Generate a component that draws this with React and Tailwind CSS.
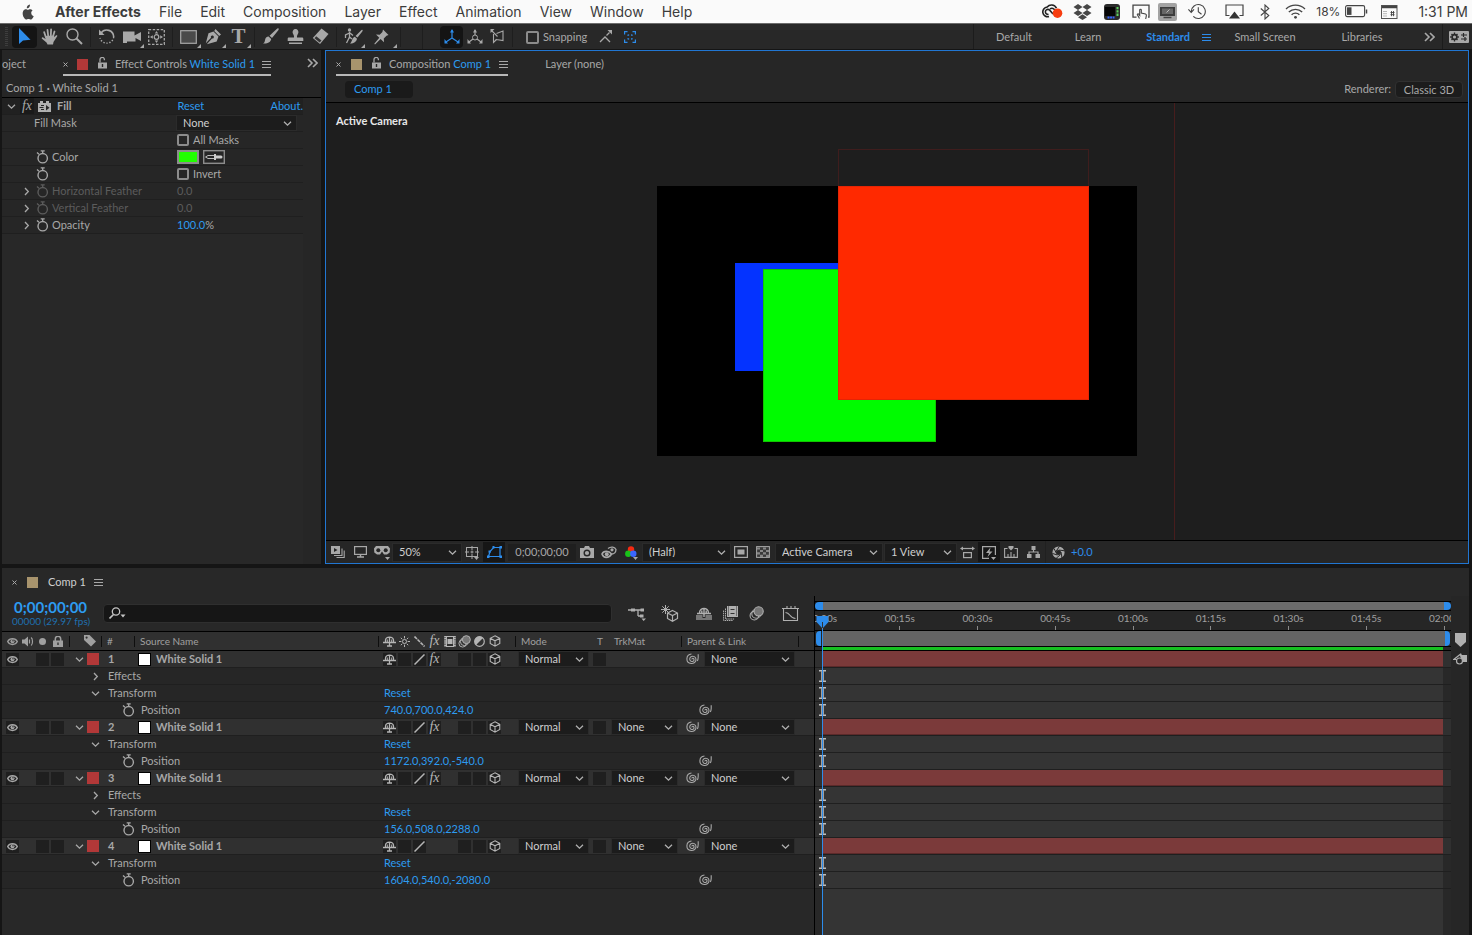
import React from 'react';
import clsx from 'clsx';

/* ---------- Icons ---------- */

const Svg = ({ w = 16, h = 16, box, className, children }) => (
  <svg width={w} height={h} viewBox={box || `0 0 ${w} ${h}`} fill="none" className={clsx('shrink-0', className)} aria-hidden="true">
    {children}
  </svg>
);

const Chevron = ({ open, className }) => (
  <Svg w={9} h={9} className={className}>
    <path d={open ? 'M1 2.8 4.5 6.2 8 2.8' : 'M3 1 6.3 4.5 3 8'} stroke="currentColor" strokeWidth="1.3" />
  </Svg>
);

const MenuLines = () => (
  <Svg w={9} h={9}>
    <path d="M0 1.5h9M0 4.5h9M0 7.5h9" stroke="currentColor" />
  </Svg>
);

const DoubleChevron = () => (
  <Svg w={11} h={10}>
    <path d="M1 1l4 4-4 4M6 1l4 4-4 4" stroke="currentColor" strokeWidth="1.6" />
  </Svg>
);

const CloseX = () => (
  <Svg w={5} h={5}>
    <path d="M.5.5l4 4M4.5.5l-4 4" stroke="currentColor" />
  </Svg>
);

const OpenLock = () => (
  <Svg w={9} h={12} className="-mt-[3px]">
    <rect x="0" y="5.5" width="9" height="6" fill="currentColor" />
    <path d="M2 5.5V2.8a2.2 2.2 0 0 1 4.4-.3v.8" stroke="currentColor" strokeWidth="1.3" />
    <path d="M4.5 7v3" stroke="#262626" strokeWidth="1.4" />
  </Svg>
);

const Stopwatch = () => (
  <Svg w={13} h={14}>
    <circle cx="6.7" cy="8.2" r="4.7" stroke="currentColor" strokeWidth="1.4" />
    <path d="M4.7.8h4M6.7 1v2.500M1 2.500l2 1.800" stroke="currentColor" strokeWidth="1.300" />
  </Svg>
);

const Eye = () => (
  <Svg w={11} h={9}>
    <path d="M.7 4.5C2.6.6 8.4.6 10.3 4.5 8.4 8.4 2.6 8.4.7 4.5Z" stroke="currentColor" strokeWidth="1.4" />
    <circle cx="5.5" cy="4.3" r="2" fill="currentColor" />
    <circle cx="6" cy="3.8" r=".7" fill="#222" />
  </Svg>
);

const Shy = () => (
  <Svg w={13} h={11}>
    <path d="M2.500 6V4.200C3 .2 10 .2 10.500 4.200V6M0 6.500h13M6.500 1v9M4 10h5" stroke="currentColor" strokeWidth="1.300" />
    <path d="M4.300 3.500v3M8.700 3.500v3" stroke="currentColor" />
  </Svg>
);

const Sun = () => (
  <Svg w={11} h={11}>
    <circle cx="5.5" cy="5.5" r="2" stroke="currentColor" />
    <path d="M5.5 0v2.4M5.5 8.6V11M0 5.5h2.4M8.6 5.5H11M1.8 1.8l1.5 1.5M7.7 7.7l1.5 1.5M9.2 1.8 7.7 3.3M3.3 7.7 1.8 9.2" stroke="currentColor" />
  </Svg>
);

const Backslash = () => (
  <Svg w={11} h={11}>
    <path d="M.5.5l10 10" stroke="currentColor" strokeWidth="1.6" strokeDasharray="3.5 .8" />
  </Svg>
);

const Slash = () => (
  <Svg w={11} h={11}>
    <path d="M.5 10.5l10-10" stroke="currentColor" strokeWidth="1.5" />
  </Svg>
);

const Fx = () => <span className="text-[14px] leading-3 italic font-['Liberation_Serif',serif]">fx</span>;

const Film = () => (
  <Svg w={12} h={11}>
    <rect x="2.5" y=".5" width="7" height="10" stroke="currentColor" />
    <rect x="3.5" y="3" width="5" height="5" fill="currentColor" />
    <path d="M1.2 0v11M10.8 0v11" stroke="currentColor" strokeWidth="2" strokeDasharray="1.5 .6" />
  </Svg>
);

const MotionBlur = ({ size = 13 }) => (
  <Svg w={size} h={size} box="0 0 14 14">
    <circle cx="5" cy="9" r="4" stroke="currentColor" />
    <circle cx="6.8" cy="7.2" r="4.2" stroke="currentColor" />
    <circle cx="9" cy="5" r="4.3" fill="#777" stroke="currentColor" />
  </Svg>
);

const Adjust = () => (
  <Svg w={11} h={11}>
    <circle cx="5.5" cy="5.5" r="4.8" stroke="currentColor" strokeWidth="1.2" />
    <path d="M9 2A4.900 4.900 0 0 0 2 9Z" fill="currentColor" />
  </Svg>
);

const Cube = () => (
  <Svg w={12} h={12}>
    <path d="M6 .8l4.8 2.5v5.2L6 11.2 1.2 8.5V3.3ZM1.2 3.3 6 5.8l4.8-2.5M6 5.8v5.4" stroke="currentColor" strokeWidth="1.1" />
  </Svg>
);

const PickWhip = () => (
  <Svg w={13} h={12}>
    <path d="M6 6.3c-.2-1.2 1.7-1.5 2 0 .3 1.7-1.6 2.6-3 1.9C3.2 7.3 3.3 4.8 5 3.7c2.2-1.3 5 .2 5 2.700 0 2.600-2.300 4.300-4.800 4.100C2.700 10.200.8 8.200.9 5.700 1 3.200 3 1.200 5.500 1M12.200 1.200v3.300c0 1.500-.3 2.500-1 3.500" stroke="currentColor" strokeWidth="1.100" />
  </Svg>
);

const CornerMark = () => (
  <Svg w={4} h={4} className="absolute right-0 bottom-0">
    <path d="M4 0v4H0z" fill="currentColor" />
  </Svg>
);

const SmallTri = () => (
  <Svg w={5} h={3} className="absolute right-0 -bottom-px">
    <path d="M0 0h5L2.500 3z" fill="currentColor" />
  </Svg>
);

/* ---------- macOS menu bar ---------- */

const menus = ['File', 'Edit', 'Composition', 'Layer', 'Effect', 'Animation', 'View', 'Window', 'Help'];

const StatusItem = ({ className, label, children }) => (
  <button aria-label={label} className={clsx('flex h-full items-center justify-center', className)}>
    {children}
  </button>
);

const MenuBar = () => (
  <header className="flex h-[23px] shrink-0 items-center bg-[#fafafa] pl-[21px] text-[14px] whitespace-nowrap text-[#3c3c3c] font-['Inter',sans-serif]">
    <button aria-label="Apple" className="mr-[20px]">
      <Svg w={14} h={16} box="0 0 14 17">
        <path d="M9.400 2.900C10 2.100 10.300 1.100 10.200 0 9.200.1 8.200.6 7.600 1.400 7 2.100 6.700 3.100 6.800 4c1 .1 2-.4 2.600-1.100ZM11.500 9c0-1.600 1.300-2.400 1.400-2.500-.8-1.200-2-1.300-2.400-1.300-1-.1-2 .6-2.500.6S6.700 5.200 5.900 5.200C4.700 5.200 3.600 5.900 3 6.900c-1.300 2.200-.3 5.500.9 7.300.6.9 1.300 1.900 2.300 1.800.9 0 1.300-.6 2.400-.6s1.400.6 2.400.6 1.600-.9 2.200-1.700c.7-1 1-2 1-2-.1 0-2.700-.7-2.700-3.300Z" fill="#444" transform="translate(-1.100 .5)" />
      </Svg>
    </button>
    <nav className="flex gap-[18px]">
      <button className="font-bold">After Effects</button>
      {menus.map((m) => <button key={m}>{m}</button>)}
    </nav>
    <div className="ml-auto flex h-full items-center pr-1">
      <StatusItem label="Creative Cloud" className="w-[30px]">
        <Svg w={21} h={15}>
          <path d="M7 12.600A4.900 4.900 0 1 1 5.200 3C7.500.2 12.500.2 14.500 4.200M6.500 10.300A2.500 2.500 0 1 1 6.300 5.400c2.200.1 2.700 3.600 5.200 4.600M13.500 7C12.500 4.200 9.500 3.500 8 5" stroke="#222" strokeWidth="1.600" />
          <circle cx="15.500" cy="9.200" r="4.800" fill="#f73d10" />
        </Svg>
      </StatusItem>
      <StatusItem label="Dropbox" className="w-[30px]">
        <Svg w={19} h={16}>
          <path d="M5 0l4.500 3L5 6 .5 3ZM14 0l4.500 3L14 6 9.500 3ZM5 6l4.500 3L5 12 .5 9ZM14 6l4.500 3-4.500 3-4.500-3ZM9.500 10.300 14 13.200 9.500 16 5 13.200Z" fill="#474747" />
        </Svg>
      </StatusItem>
      <StatusItem label="Monitor" className="w-[29px]">
        <Svg w={16} h={16}>
          <rect width="16" height="16" rx="3" fill="#2b2b2b" />
          <rect x="1" y="3" width="10" height="9" fill="#050505" />
          <path d="M13.500 3v9" stroke="#5fd35f" strokeWidth="2" strokeDasharray="2.300 1" />
          <path d="M3.500 13.500h7" stroke="#3465ff" strokeWidth="2" strokeDasharray="2 .6" />
        </Svg>
      </StatusItem>
      <StatusItem label="Touch" className="w-[29px]">
        <Svg w={18} h={15}>
          <path d="M4.500 13.200H1V1.200h16v12h-1" stroke="#444" strokeWidth="1.300" />
          <path d="M7.500 14.500 5.500 11c-.5-1 .6-1.500 1.200-.8l1 1.200V6c0-1.100 1.600-1.100 1.600 0v3l4.200 1c.8.300 1 1 .8 1.800L13.700 15" stroke="#444" strokeWidth="1.100" />
        </Svg>
      </StatusItem>
      <StatusItem label="Display" className="w-[24px]">
        <Svg w={19} h={18}>
          <rect width="19" height="18" rx="2" fill="#a3a3a3" />
          <rect x="2" y="4" width="15" height="9" fill="#3c3c3c" />
          <rect x="4" y="5.500" width="11" height="5.500" fill="#666" />
          <path d="M5.500 14.500h8" stroke="#444" strokeWidth="1.500" />
          <path d="M8.500 9.500l3-3" stroke="#bbb" />
        </Svg>
      </StatusItem>
      <StatusItem label="Time Machine" className="w-[36px]">
        <Svg w={19} h={17}>
          <path d="M3.300 8.500a7 7 0 1 1 2 4.900M.4 6.400l2.800 3 2.800-3M10.300 4.300v4.400l3.200 2.500" stroke="#444" strokeWidth="1.100" />
        </Svg>
      </StatusItem>
      <StatusItem label="AirPlay" className="w-[38px]">
        <Svg w={19} h={15}>
          <path d="M4.500 11.500H1V1h17v10.500h-3.500" stroke="#444" strokeWidth="1.200" />
          <path d="M9.500 7.500 15 14.500H4Z" fill="#333" />
        </Svg>
      </StatusItem>
      <StatusItem label="Bluetooth" className="w-[24px]">
        <Svg w={10} h={16}>
          <path d="M.8 4.500l8 7L5 15V1l3.800 3.500-8 7" stroke="#444" strokeWidth="1.100" />
        </Svg>
      </StatusItem>
      <StatusItem label="Wi-Fi" className="w-[36px]">
        <Svg w={21} h={15}>
          <path d="M1 5a13.500 13.500 0 0 1 19 0M3.800 8a9.600 9.600 0 0 1 13.400 0M6.600 10.800a5.500 5.500 0 0 1 7.800 0" stroke="#444" strokeWidth="1.300" />
          <circle cx="10.500" cy="13.300" r="1.400" fill="#444" />
        </Svg>
      </StatusItem>
      <span className="mr-1 ml-[3px] text-[12px]">18%</span>
      <StatusItem label="Battery" className="w-[24px]">
        <Svg w={23} h={13}>
          <rect x=".6" y=".6" width="19" height="11" rx="1.500" stroke="#444" strokeWidth="1.100" />
          <rect x="2" y="2.300" width="4.500" height="7.600" fill="#444" />
          <path d="M21.500 4.500v4" stroke="#444" strokeWidth="1.500" />
        </Svg>
      </StatusItem>
      <StatusItem label="Keyboard viewer" className="w-[42px]">
        <Svg w={17} h={14}>
          <rect x=".5" y=".5" width="15.500" height="13" stroke="#555" />
          <path d="M1 2h15" stroke="#444" strokeWidth="2.500" />
          <path d="M2.500 6.500h4M2.500 8.700h4M2.500 11h4" stroke="#777" strokeDasharray="1 1" />
          <path d="M9.500 7.500h4M9.500 9.700h4M10.500 6v5.200M12.500 6v5.200" stroke="#444" strokeWidth=".9" />
        </Svg>
      </StatusItem>
      <span className="ml-2">1:31 PM</span>
    </div>
  </header>
);

/* ---------- Toolbar ---------- */

const Tool = ({ label, active, more, width = 'w-[25px]', children }) => (
  <button
    aria-label={label}
    className={clsx('relative flex h-[22px] items-center justify-center', width, active && 'rounded-sm bg-[#141414] text-[#2d8ceb]')}
  >
    {children}
    {more && <CornerMark />}
  </button>
);

const Sep = () => <span className="mx-[3px] h-5 w-px bg-[#1e1e1e]" />;

const workspaces = [
  ['Default', 'w-[80px]'],
  ['Learn', 'w-[68px]'],
  ['Standard', 'w-[100px]'],
  ['Small Screen', 'w-[86px]'],
  ['Libraries', 'w-[108px]'],
];

const Toolbar = () => (
  <div className="flex h-[26px] shrink-0 items-center border-t border-[#6b6b6b] bg-[#282828] text-[#a8a8a8]">
    <span className="mr-1 ml-[5px] h-5 w-[3px] bg-[repeating-linear-gradient(#3d3d3d_0_1px,transparent_1px_2px)]" />
    <Tool label="Selection" active>
      <Svg w={13} h={17}><path d="M1 0v16l4-3.500 7.500-.8Z" fill="currentColor" /></Svg>
    </Tool>
    <Tool label="Hand">
      <Svg w={17} h={17}>
        <path d="M4.800 9 3.200 4.200M7.200 8 6.500 2M9.800 8l.3-6.500M12 8.500l1.500-5" stroke="currentColor" strokeWidth="1.800" strokeLinecap="round" />
        <path d="M4 8l9-.5c0 2 .5 1.500 2-.2.800-.5 1.700.2 1.200 1L12.500 14l-.5 2.500H6.500L5.500 14.500 1 10.800c-.8-.8.2-1.900 1.200-1.400L4.500 11Z" fill="currentColor" />
      </Svg>
    </Tool>
    <Tool label="Zoom">
      <Svg w={17} h={17}>
        <circle cx="6.500" cy="6.500" r="5.500" stroke="currentColor" strokeWidth="1.400" />
        <path d="M10.500 10.500l5.500 5.500" stroke="currentColor" strokeWidth="2" />
      </Svg>
    </Tool>
    <Sep />
    <Tool label="Rotation">
      <Svg w={17} h={17}>
        <path d="M3 5A7 7 0 0 1 15.700 9" stroke="currentColor" strokeWidth="1.600" />
        <path d="M15.700 9A7 7 0 0 1 2 10" stroke="currentColor" strokeWidth="1.400" strokeDasharray="1.400 1.600" />
        <path d="M1 1.500v5.500h5.500Z" fill="currentColor" />
      </Svg>
    </Tool>
    <Tool label="Camera" more>
      <Svg w={19} h={14}>
        <path d="M1 1.500h11.500v4L19 2v9l-5.500-3v3.500H5V13H1Z" fill="currentColor" />
      </Svg>
    </Tool>
    <Tool label="Pan Behind">
      <Svg w={17} h={16}>
        <rect x=".7" y=".7" width="15.600" height="14.600" stroke="currentColor" strokeWidth="1.300" strokeDasharray="2.500 1.500" />
        <circle cx="8.500" cy="8" r="2.300" stroke="currentColor" strokeWidth="1.200" />
        <path d="M8.500 2 6.800 4.500h3.400ZM8.500 14l-1.700-2.500h3.400ZM2 8l2.800-1.700v3.400ZM15 8l-2.800-1.700v3.400Z" fill="currentColor" />
      </Svg>
    </Tool>
    <Sep />
    <Tool label="Rectangle" more>
      <Svg w={17} h={14}><rect x=".7" y=".7" width="15.600" height="12.600" fill="#4a4a4a" stroke="currentColor" strokeWidth="1.200" /></Svg>
    </Tool>
    <Tool label="Pen" more>
      <Svg w={17} h={17}>
        <path d="M10.500 1l5.500 5.500-1.800 1.400-5-5ZM8.500 3.500l5 5-1.800 5L1.800 16.200 7 10.500A1.500 1.500 0 1 0 6 9.700L.8 15.200 3.500 5.300Z" fill="currentColor" />
      </Svg>
    </Tool>
    <Tool label="Type" more>
      <span className="text-[21px] leading-none font-bold font-['Liberation_Serif',serif]">T</span>
    </Tool>
    <Sep />
    <Tool label="Brush">
      <Svg w={17} h={17}>
        <path d="M16.500.5c.6.500.2 1.200-.2 1.800L10 10 7.500 7.800 14.700 1c.600-.500 1.200-1 1.800-.5ZM6.600 8.600 9.200 11c-.500 3-3.500 5-8.200 4.500 2-1 1.600-2.500 2.300-4.500.500-1.400 1.700-2.500 3.300-2.400Z" fill="currentColor" />
      </Svg>
    </Tool>
    <Tool label="Clone Stamp">
      <Svg w={17} h={16}>
        <path d="M8.500 0a3 3 0 0 1 2.700 4.200C10.300 6 9.800 7 10 8.500h5c1 0 1.300.5 1.300 1.500v2H.7v-2C.7 9 1 8.500 2 8.500h5c.2-1.500-.3-2.500-1.200-4.300A3 3 0 0 1 8.500 0ZM2 13.500h13V15H2Z" fill="currentColor" />
      </Svg>
    </Tool>
    <Tool label="Eraser">
      <Svg w={17} h={17}>
        <path d="M9.500.5 16.500 6 8 16 .8 10Z" fill="currentColor" />
        <path d="M4.200 8.300 2.500 10.200l5.200 4.300 1.800-2Z" fill="#333" />
      </Svg>
    </Tool>
    <Sep />
    <Tool label="Roto Brush" more>
      <Svg w={20} h={17}>
        <circle cx="6.500" cy="2" r="1.700" fill="currentColor" />
        <path d="M6.500 4v5l-3 6M6.500 9l2.500 2M6.500 5 2.500 7v3M7 5l3 2.500" stroke="currentColor" strokeWidth="1.300" />
        <path d="M19.500 2c.4.400.1 1-.2 1.400L14.500 9.500l-2-1.500 5.500-5.600c.5-.5 1-.800 1.500-.4ZM11.800 8.800l2.200 1.900c-.5 3-3.500 5-7 4.800 2.500-1.500 1.800-6 4.800-6.700Z" fill="currentColor" />
      </Svg>
    </Tool>
    <Tool label="Puppet Pin" more width="w-[32px]">
      <Svg w={15} h={16}>
        <path d="M9 .5 14.500 6l-2 .7-2.700 2.800.2 3.700-3.400-3.300L1 15.500.3 14.800l5-6L2 5.500l3.700.200L8.400 3Z" fill="currentColor" />
      </Svg>
    </Tool>
    <Sep />
    <span className="mr-[17px] ml-[18px] h-6 w-px bg-[#1e1e1e]" />
    <Tool label="Local Axis Mode" active width="w-[23px]">
      <Svg w={16} h={15}>
        <path d="M8 1v8L2 13M8 9l6 4" stroke="currentColor" strokeWidth="1.200" />
        <path d="M8 0 6 3.500h4ZM.5 14.500V10l3.500 4.500ZM15.500 14.500V10L12 14.500Z" fill="currentColor" />
      </Svg>
    </Tool>
    <Tool label="World Axis Mode" width="w-[23px]">
      <Svg w={16} h={15}>
        <path d="M8 1v5M6 10l-4 3M10 10l4 3" stroke="currentColor" strokeWidth="1.200" />
        <circle cx="8" cy="8.500" r="2.500" stroke="currentColor" />
        <path d="M8 0 6 3.500h4ZM.5 14.500V10l3.500 4.500ZM15.500 14.500V10L12 14.500Z" fill="currentColor" />
      </Svg>
    </Tool>
    <Tool label="View Axis Mode" width="w-[23px]">
      <Svg w={16} h={15}>
        <path d="M3.500 5v8.500l3-3 6.500 1V2L6.500 4.500M1.500 1.500l6 6M3.500 13.500 6.500 10" stroke="currentColor" strokeWidth="1.100" />
        <path d="M.5 0h4L.5 4Z" fill="currentColor" />
      </Svg>
    </Tool>
    <Sep />
    <label className="ml-[10px] flex items-center gap-1 pt-[2px] text-[11px]">
      <input type="checkbox" className="size-[13px] appearance-none rounded-[2px] border-2 border-[#8c8c8c] checked:bg-[#8c8c8c]" />
      Snapping
    </label>
    <button aria-label="Snap edges" className="ml-3">
      <Svg w={13} h={13}>
        <path d="M1 12l5-5 5 5M7.500 5.500l3-3" stroke="currentColor" strokeWidth="1.300" />
        <path d="M8.500 0H13v4.500Z" fill="currentColor" />
      </Svg>
    </button>
    <button aria-label="Snap to features" className="ml-3 text-[#2d8ceb]">
      <Svg w={12} h={12}>
        <path d="M.6 3.500V.6h2.900M8.500.6h2.900v2.900M11.400 8.500v2.900H8.500M3.500 11.400H.6V8.500" stroke="currentColor" strokeWidth="1.200" />
        <path d="M4 4h1.200M7 4h1.200M4 8h1.200M7 8h1.200M4 3.500v1.500M8 3.500v1.500M4 7v1.500M8 7v1.500" stroke="currentColor" />
      </Svg>
    </button>
    <div className="ml-auto flex h-full items-center border-l border-[#1c1c1c] text-[11px]">
      {workspaces.map(([name, width]) =>
        name === 'Standard' ? (
          <button key={name} className={clsx('flex items-center justify-end gap-3 pt-[2px] pr-[11px] font-bold text-[#2d8ceb]', width)}>
            {name}
            <MenuLines />
          </button>
        ) : (
          <button key={name} className={clsx('pt-[2px]', width)}>{name}</button>
        ),
      )}
      <button aria-label="More workspaces" className="flex w-[26px] justify-center"><DoubleChevron /></button>
      <span className="mr-[3px] h-full w-px bg-[#1c1c1c]" />
      <button aria-label="Workspace settings" className="flex w-[26px] justify-center">
        <Svg w={20} h={12}>
          <rect width="20" height="12" rx="1" fill="currentColor" />
          <circle cx="5.500" cy="6" r="2.400" stroke="#282828" strokeWidth="1.700" />
          <path d="M5.500 1.600v1.500M5.500 9v1.500M1.100 6h1.500M8.400 6h1.500M2.500 3l1 1M7.500 8l1 1M8.500 3l-1 1M3.500 8l-1 1" stroke="#282828" strokeWidth="1.400" />
          <path d="M12 4h6M12 8h6M14.500 2v4M16 6v4" stroke="#282828" strokeWidth="1.200" />
        </Svg>
      </button>
    </div>
  </div>
);

/* ---------- Effect Controls ---------- */

const Select = ({ label, value, className }) => (
  <span className={clsx('relative flex items-center bg-[#1c1c1c] text-[#cfcfcf] outline outline-[#2b2b2b]', className)}>
    <select aria-label={label} className="h-full w-full appearance-none pb-[2px] pl-[6px] text-[11px] leading-none outline-none">
      <option>{value}</option>
    </select>
    <Chevron open className="pointer-events-none absolute right-[4px] text-[#b0b0b0]" />
  </span>
);

const FxRow = ({ label, dim, timed = true, arrow, children }) => (
  <div className={clsx('flex h-[17px] items-center border-b border-[#1f1f1f]', dim && 'text-[#5c5c5c]')}>
    <span className="flex w-[34px] justify-end pr-[5px] text-[#a8a8a8]">{arrow && <Chevron />}</span>
    <span className={clsx('flex w-[141px] items-center gap-[3px]', !timed && '-ml-[2px] mr-[2px]')}>
      {timed && <Stopwatch />}
      {label}
    </span>
    {children}
  </div>
);

const FxCheck = ({ label }) => (
  <label className="flex items-center gap-1">
    <input type="checkbox" className="size-[12px] appearance-none rounded-[2px] border-2 border-[#8c8c8c] checked:bg-[#8c8c8c]" />
    {label}
  </label>
);

const EffectControls = () => (
  <section className="flex w-[319px] shrink-0 flex-col bg-[#262626] text-[11px] text-[#a8a8a8]">
    <div className="flex h-[26px] items-center overflow-hidden">
      <button className="w-[61px] pt-[2px] text-left">oject</button>
      <div className="flex h-full items-center border-b-2 border-[#b8b8b8] pt-[4px]">
        <CloseX />
        <span className="mr-[10px] ml-[9px] size-[11px] bg-[#b23838]" />
        <OpenLock />
        <button className="mr-[7px] ml-2">
          Effect Controls <span className="text-[#2d9bf0]">White Solid 1</span>
        </button>
        <MenuLines />
      </div>
      <button aria-label="More tabs" className="mr-[3px] ml-auto"><DoubleChevron /></button>
    </div>
    <div className="h-[22px] border-b border-black pl-1 leading-[24px]">Comp 1 <b>·</b> White Solid 1</div>
    <div className="mr-[18px]">
      <div className="flex h-[17px] items-center border-b border-[#1f1f1f] bg-[#212121] pl-[5px]">
        <Chevron open />
        <span className="ml-1 w-[14px] bg-[#1a1a1a] text-center"><Fx /></span>
        <Svg w={13} h={12} className="ml-[4px] text-[#b0b0b0]">
          <path d="M0 3h2V1h3v2h3V1h3v2h2v9H0Z" fill="currentColor" />
          <path d="M3 5.500h3M1.500 7.500h4M3 9.500h3" stroke="#262626" />
          <path d="M8 5v5.500l3.500-2.700Z" fill="#262626" />
        </Svg>
        <span className="ml-[6px] flex-1 font-bold">Fill</span>
        <button className="w-[93px] text-left text-[#2d9bf0]">Reset</button>
        <button className="text-[#2d9bf0]">About.</button>
      </div>
      <FxRow label="Fill Mask" timed={false}>
        <Select label="Fill Mask" value="None" className="h-[14px] w-[119px]" />
      </FxRow>
      <FxRow timed={false}><FxCheck label="All Masks" /></FxRow>
      <FxRow label="Color">
        <label className="flex h-[14px] w-[22px] border-2 border-[#8c8c8c] bg-[#22ff00]">
          <input type="color" aria-label="Color" defaultValue="#22ff00" className="size-full opacity-0" />
        </label>
        <button aria-label="Eyedropper" className="ml-1">
          <Svg w={22} h={14}>
            <rect x=".7" y=".7" width="20.600" height="12.600" stroke="#8c8c8c" strokeWidth="1.400" />
            <path d="M2.500 7 5 5.500h6M2.500 7 5 8.500h6" stroke="#bbb" />
            <path d="M11 4h2v1.500h5a1.500 1.500 0 0 1 0 3h-5V10h-2Z" fill="#ccc" />
          </Svg>
        </button>
      </FxRow>
      <FxRow><FxCheck label="Invert" /></FxRow>
      <FxRow label="Horizontal Feather" arrow dim>0.0</FxRow>
      <FxRow label="Vertical Feather" arrow dim>0.0</FxRow>
      <FxRow label="Opacity" arrow>
        <span className="text-[#2d9bf0]">100.0</span>%
      </FxRow>
    </div>
    <div className="mr-[18px] flex-1 bg-[#282828]" />
  </section>
);

/* ---------- Composition viewer ---------- */

const ViewBtn = ({ label, active, tri, children }) => (
  <button aria-label={label} className={clsx('flex h-[20px] w-[22px] items-center justify-center', active && 'bg-[#161616]')}>
    <span className="relative">
      {children}
      {tri && <SmallTri />}
    </span>
  </button>
);

const ViewerBar = () => (
  <div className="flex h-[23px] shrink-0 items-center border-t border-black bg-[#262626] pl-px text-[11px] text-[#a8a8a8]">
    <ViewBtn label="Always Preview This View">
      <Svg w={14} h={12}>
        <rect width="9" height="8" fill="currentColor" />
        <path d="M3 2v4l3.500-2Z" fill="#262626" />
        <path d="M11 2.500v7H3M13.200 4.500v7H5.500" stroke="currentColor" strokeWidth="1.100" />
      </Svg>
    </ViewBtn>
    <ViewBtn label="Primary Viewer">
      <Svg w={13} h={12}>
        <rect x=".6" y=".6" width="11.800" height="7.800" stroke="currentColor" strokeWidth="1.200" />
        <path d="M6.500 8.500v2M3 11h7" stroke="currentColor" strokeWidth="1.400" />
      </Svg>
    </ViewBtn>
    <ViewBtn label="3D Glasses" tri>
      <Svg w={16} h={13}>
        <path d="M2 0h12l2 2.500-.3 4-2.700 2H10L8 5.500 6 8.500H3L.3 6.500 0 2.500Z" fill="currentColor" />
        <circle cx="4.300" cy="4.300" r="2" fill="#262626" />
        <circle cx="11.700" cy="4.300" r="2" fill="#262626" />
      </Svg>
    </ViewBtn>
    <Select label="Magnification" value="50%" className="h-[17px] w-[68px]" />
    <ViewBtn label="Grid and guides" tri>
      <Svg w={14} h={13}>
        <rect x="1.500" y="1.500" width="11" height="9" stroke="currentColor" />
        <path d="M7 0v4M7 8v5M0 6h4M10 6h4M5.500 6h3M7 4.500v3" stroke="currentColor" />
      </Svg>
    </ViewBtn>
    <ViewBtn label="Mask visibility" active>
      <Svg w={15} h={12} className="text-[#2d8ceb]">
        <path d="M1.500 10.500 3 5.500 6.500 1.500h6.500v9Z" stroke="currentColor" strokeWidth="1.200" />
        <path d="M0 9.500h2.500V12H0ZM12.500 9.500H15V12h-2.500ZM12.500 0H15v2.500h-2.500ZM5.500 0h2v2.500h-2ZM1.500 4.500h2.200v2.200H1.500Z" fill="currentColor" />
      </Svg>
    </ViewBtn>
    <button className="ml-[3px] h-[17px] w-[68px] bg-[#1f1f1f]">0;00;00;00</button>
    <ViewBtn label="Take Snapshot">
      <Svg w={14} h={12}>
        <path d="M0 2h4l1-2h4l1 2h4v10H0Z" fill="currentColor" />
        <circle cx="7" cy="7" r="2.800" stroke="#262626" strokeWidth="1.400" />
      </Svg>
    </ViewBtn>
    <ViewBtn label="Show Snapshot">
      <Svg w={16} h={13}>
        <path d="M1 8C2.500 4.500 8 4.500 10.500 8 8 12.500 2.500 12.500 1 8Z" stroke="currentColor" strokeWidth="1.600" />
        <circle cx="5.800" cy="8.200" r="2" fill="currentColor" />
        <path d="M7 2.500c3-2.500 7-1.500 8 1-.2 3-2 4.500-4.500 4.500" stroke="currentColor" strokeWidth="1.300" />
        <circle cx="11" cy="3.800" r="1.600" fill="currentColor" />
      </Svg>
    </ViewBtn>
    <ViewBtn label="Channels" tri>
      <Svg w={13} h={13}>
        <circle cx="6" cy="3.500" r="3.200" fill="#f52a12" />
        <circle cx="3.300" cy="7.800" r="3.200" fill="#19c219" />
        <circle cx="8.300" cy="7.800" r="3.200" fill="#3a66ff" />
      </Svg>
    </ViewBtn>
    <Select label="Resolution" value="(Half)" className="ml-px h-[17px] w-[87px]" />
    <ViewBtn label="Region of Interest">
      <Svg w={14} h={12}>
        <rect x=".6" y=".6" width="12.800" height="10.800" stroke="currentColor" strokeWidth="1.200" />
        <rect x="3.500" y="3.500" width="7" height="5" fill="currentColor" />
      </Svg>
    </ViewBtn>
    <ViewBtn label="Transparency Grid">
      <Svg w={14} h={12}>
        <rect x=".6" y=".6" width="12.800" height="10.800" fill="#3a3a3a" stroke="currentColor" />
        <path d="M1 2.500h12M4 5h9M1 7.300h12M4 9.800h9" stroke="#888" strokeWidth="2.200" strokeDasharray="3 3" />
      </Svg>
    </ViewBtn>
    <Select label="3D View" value="Active Camera" className="ml-[2px] h-[17px] w-[106px]" />
    <Select label="View Layout" value="1 View" className="ml-[3px] h-[17px] w-[71px]" />
    <ViewBtn label="Pixel Aspect Ratio">
      <Svg w={15} h={13}>
        <path d="M2 2.500h11" stroke="currentColor" strokeWidth="1.200" />
        <path d="M0 2.500 3 .5v4ZM15 2.500 12 .5v4Z" fill="currentColor" />
        <rect x="3.600" y="6.600" width="7.800" height="5" stroke="currentColor" strokeWidth="1.200" />
      </Svg>
    </ViewBtn>
    <ViewBtn label="Fast Previews" active tri>
      <Svg w={14} h={13}>
        <path d="M7 12.400H.6V.6h12.800V9" stroke="currentColor" strokeWidth="1.200" />
        <path d="M8.500 1.500 4 7h3l-1.500 4L10.500 5.500h-3Z" fill="currentColor" />
      </Svg>
    </ViewBtn>
    <ViewBtn label="Timeline">
      <Svg w={14} h={12}>
        <path d="M3.500 2.500H.6v8.900h12.800V2.500h-2.900M4 8v3M7 6v5M10 8v3" stroke="currentColor" strokeWidth="1.100" />
        <path d="M4.500 0h5v2L7 4.500 4.500 2Z" fill="currentColor" />
      </Svg>
    </ViewBtn>
    <ViewBtn label="Flowchart">
      <Svg w={13} h={12}>
        <path d="M4.500 0h4v4h-4ZM0 8h4.500v4H0ZM8.500 8H13v4H8.500Z" fill="currentColor" />
        <path d="M6.500 4v2M2 8V6h9v2" stroke="currentColor" strokeWidth="1.200" />
      </Svg>
    </ViewBtn>
    <span className="mx-px h-full w-px bg-[#202020]" />
    <ViewBtn label="Reset Exposure">
      <Svg w={13} h={13}>
        <circle cx="6.500" cy="6.500" r="4.300" stroke="currentColor" strokeWidth="3.600" />
        <path d="M4.200 5.200 7.500.2M6.800 4l5.700.8M9 6l1 6M8.500 8.500l-4.500 4M5.500 9 .5 7.500M4.300 7 2 2.500" stroke="#262626" />
      </Svg>
    </ViewBtn>
    <button className="ml-[2px] text-[#2d8ceb]">+0.0</button>
  </div>
);

const Composition = () => (
  <section className="ml-[4px] flex min-w-0 flex-1 flex-col border border-[#2176d2] bg-[#262626] text-[11px] text-[#a8a8a8]">
    <div className="flex h-[25px] shrink-0 items-center pl-[10px]">
      <div className="flex h-full items-center border-b-2 border-[#b8b8b8] pt-[3px]">
        <CloseX />
        <span className="mr-[10px] ml-[10px] size-[11px] bg-[#a8946d]" />
        <OpenLock />
        <button className="mr-2 ml-[8px]">
          Composition <span className="text-[#2d9bf0]">Comp 1</span>
        </button>
        <MenuLines />
      </div>
      <button className="ml-[37px] pt-[2px]">Layer (none)</button>
    </div>
    <div className="flex h-[27px] shrink-0 items-center border-b border-black pr-[5px] pl-[19px]">
      <button className="h-[17px] w-[68px] rounded-sm bg-[#1a1a1a] pr-[12px] text-[#2d9bf0]">Comp 1</button>
      <span className="mr-1 ml-auto">Renderer:</span>
      <button className="h-[17px] w-[68px] rounded-sm border border-[#303030] bg-[#1c1c1c] leading-none">Classic 3D</button>
    </div>
    <div className="relative flex flex-1 items-center justify-center overflow-hidden bg-[#1e1e1e] pb-px">
      <p className="absolute top-[10px] left-[10px] font-bold text-[#e8e8e8]">Active Camera</p>
      {/* canvas with the solids and their guides */}
      <div className="relative h-[270px] w-[480px] bg-black">
        <div className="absolute top-[77px] left-[78px] h-[108px] w-[104px] bg-[#0433ff]" />
        <div className="absolute top-[83px] left-[106px] h-[173px] w-[173px] border border-[#12c400] bg-[#00fb00]" />
        <div className="absolute -top-[37px] left-[181px] h-[38px] w-[251px] border border-[#3f1d1d]" />
        <div className="absolute top-0 left-[181px] h-[214px] w-[251px] border border-[#e52505] bg-[#ff2900]" />
        <div className="absolute -top-[100px] left-[517px] h-[480px] w-px bg-[#481d1d]" />
      </div>
    </div>
    <ViewerBar />
  </section>
);

/* ---------- Timeline ---------- */

const layers = [
  { id: 1, fx: true, matte: false, effects: true, position: '740.0,700.0,424.0' },
  { id: 2, fx: true, matte: true, effects: false, position: '1172.0,392.0,-540.0' },
  { id: 3, fx: true, matte: true, effects: true, position: '156.0,508.0,2288.0' },
  { id: 4, fx: false, matte: true, effects: false, position: '1604.0,540.0,-2080.0' },
];

const times = ['00:00s', '00:15s', '00:30s', '00:45s', '01:00s', '01:15s', '01:30s', '01:45s', '02:00s'];

const Cell = ({ plain, children }) => (
  <span className={clsx('flex h-[13px] w-[13px] items-center justify-center', !plain && 'bg-[#1f1f1f]')}>{children}</span>
);

const ColSep = () => <span className="h-[11px] w-px shrink-0 bg-[#0e0e0e]" />;

const LayerRow = ({ layer }) => (
  <div className="flex h-[17px] items-center border-b border-[#1f1f1f] bg-[#303030]">
    <div className="flex w-[381px] items-center pl-[4px]">
      <Cell><Eye /></Cell>
      <span className="ml-[17px] flex gap-[2px]"><Cell /><Cell /></span>
      <Chevron open className="ml-[11px]" />
      <span className="ml-[3px] size-[12px] bg-[#b23838]" />
      <span className="ml-[9px] w-[30px] font-bold">{layer.id}</span>
      <span className="size-[13px] border border-black bg-white" />
      <span className="ml-[5px] font-bold">White Solid 1</span>
    </div>
    <div className="flex w-[120px] gap-[2px] text-[#b5b5b5]">
      <Cell><Shy /></Cell>
      <Cell />
      <Cell><Slash /></Cell>
      <Cell plain={!layer.fx}>{layer.fx && <Fx />}</Cell>
      <Cell plain />
      <Cell />
      <Cell />
      <Cell><Cube /></Cell>
    </div>
    <Select label="Mode" value="Normal" className="ml-[16px] h-[14px] w-[69px]" />
    <span className="ml-[5px]"><Cell /></span>
    {layer.matte ? (
      <Select label="Track matte" value="None" className="ml-[6px] h-[14px] w-[65px]" />
    ) : (
      <span className="ml-[6px] w-[65px]" />
    )}
    <span className="mr-[6px] ml-[9px]"><PickWhip /></span>
    <Select label="Parent" value="None" className="h-[14px] w-[89px]" />
  </div>
);

const PropRow = ({ open, label, value, timed, whip }) => (
  <div className="flex h-[17px] items-center border-b border-[#1f1f1f] bg-[#262626]">
    {timed ? (
      <div className="flex w-[382px] items-center gap-[6px] pl-[120px]"><Stopwatch />{label}</div>
    ) : (
      <div className="flex w-[382px] items-center gap-2 pl-[89px]"><Chevron open={open} />{label}</div>
    )}
    <button className="text-[#2d9bf0]">{value}</button>
    {whip && <span className="mr-[102px] ml-auto"><PickWhip /></span>}
  </div>
);

const ColumnHeads = () => (
  <div className="flex h-[20px] items-center border-y border-black bg-[#303030] text-[10px] text-[#a0a0a0]">
    <div className="flex w-[67px] items-center gap-1 pl-[5px]">
      <Eye />
      <Svg w={12} h={11}>
        <path d="M0 3.500h2.500L6 .5v10L2.500 7.500H0Z" fill="currentColor" />
        <path d="M7.500 3.500v4M9 1.500c2 1 2 7 0 8" stroke="currentColor" strokeWidth="1.200" />
      </Svg>
      <Svg w={9} h={9}><circle cx="4.500" cy="4.500" r="3.500" fill="currentColor" /></Svg>
      <Svg w={10} h={11} className="ml-[2px]">
        <rect y="4.500" width="10" height="6.500" fill="currentColor" />
        <path d="M2.300 5V3a2.700 2.700 0 0 1 5.400 0v2" stroke="currentColor" strokeWidth="1.500" />
        <path d="M5 6.500v2.500" stroke="#303030" strokeWidth="1.400" />
      </Svg>
    </div>
    <ColSep />
    <div className="flex w-[31px] justify-center pl-2">
      <Svg w={12} h={12}>
        <path d="M0 0h5.500l6.500 6.500L7 11.500 0 5Z" fill="currentColor" />
        <circle cx="2.600" cy="2.600" r="1.100" fill="#303030" />
      </Svg>
    </div>
    <ColSep />
    <span className="w-[32px] pl-[5px]">#</span>
    <ColSep />
    <span className="w-[243px] pl-[5px]">Source Name</span>
    <ColSep />
    <div className="flex w-[136px] items-center gap-[2px] pl-[4px] text-[#b5b5b5]">
      {[Shy, Sun, Backslash, Fx, Film, MotionBlur, Adjust, Cube].map((Icon, i) => (
        <Cell plain key={i}><Icon /></Cell>
      ))}
    </div>
    <ColSep />
    <span className="w-[81px] pl-[5px]">Mode</span>
    <span className="w-[17px]">T</span>
    <span className="w-[67px]">TrkMat</span>
    <ColSep />
    <span className="w-[116px] pl-[5px]">Parent &amp; Link</span>
    <ColSep />
  </div>
);

const TimelineControls = () => (
  <div className="flex h-[35px] items-center pl-[10px]">
    <div className="w-[91px]">
      <p className="pl-[2px] text-[15px] leading-[15px] font-bold text-[#2d9bf0]">0;00;00;00</p>
      <p className="text-[10px] leading-[13px] text-[#1f6fae]">00000 (29.97 fps)</p>
    </div>
    <label className="flex h-[19px] w-[509px] items-center rounded-sm border border-[#2f2f2f] bg-[#161616] pl-[5px]">
      <Svg w={17} h={12} className="-mt-[2px] text-[#c4c4c4]">
        <circle cx="7" cy="4.500" r="3.700" stroke="currentColor" strokeWidth="1.300" />
        <path d="M4.500 7.500.5 11.500" stroke="currentColor" strokeWidth="1.600" />
        <path d="M11.500 7.500h5L14 10.500Z" fill="currentColor" />
      </Svg>
      <input type="search" aria-label="Search layers" className="min-w-0 flex-1 outline-none" />
    </label>
    <div className="ml-[16px] flex items-center text-[#b0b0b0]">
      <button aria-label="Mini-Flowchart" className="w-[33px]">
        <Svg w={18} h={14}>
          <path d="M0 3h4M6 3h4M10 3v6M10 3h5M10 9h4" stroke="currentColor" strokeWidth="1.300" />
          <rect x="3" y="1.500" width="4" height="3" fill="currentColor" />
          <path d="M12.500 1.500H16v3h-3.500ZM12 7.500h3.500v3H12ZM13.500 11.500h4.500L15.700 14Z" fill="currentColor" />
        </Svg>
      </button>
      <button aria-label="Draft 3D" className="w-[35px]">
        <Svg w={18} h={17}>
          <path d="M4.500 0v9M0 4.500h9M1.300 1.300l6.400 6.400M7.700 1.300 1.300 7.700" stroke="currentColor" />
          <path d="M11.500 5.500l5 2.500v5.500l-5 2.700-5-2.700V8ZM6.500 8l5 2.600 5-2.600M11.500 10.600v5.600" stroke="currentColor" strokeWidth="1.200" fill="#282828" />
        </Svg>
      </button>
      <button aria-label="Hide shy layers" className="w-[27px]">
        <Svg w={16} h={13}>
          <path d="M3.500 6C3.500 0 12.500 0 12.500 6M1 6.500h14M8 1.500V10M5.800 3.500v3M10.200 3.500v3" stroke="currentColor" strokeWidth="1.400" />
          <path d="M0 8h6.500v3h3V8H16v5H0Z" fill="#777" />
        </Svg>
      </button>
      <button aria-label="Frame blending" className="w-[26px]">
        <Svg w={15} h={15}>
          <rect x="4" y="0" width="11" height="11" fill="currentColor" />
          <path d="M5.500.5v10M13.500.5v10" stroke="#333" strokeDasharray="1 1" />
          <path d="M7.500 3.500h4M7.500 7.500h4" stroke="#333" />
          <path d="M2.500 2.500v10.500h9M.6 4.500v10h9" stroke="currentColor" strokeDasharray="1.500 .7" />
        </Svg>
      </button>
      <button aria-label="Motion blur" className="w-[33px]"><MotionBlur size={15} /></button>
      <button aria-label="Graph editor">
        <Svg w={17} h={15}>
          <path d="M1.500 2.500h14v12h-14ZM0 2.500h17M5 0v2.500M9 0v2.500M13 0v2.500M3.500 6.500c5 0 4 6 10 6" stroke="currentColor" strokeWidth="1.100" />
        </Svg>
      </button>
    </div>
  </div>
);

const Keyframe = () => (
  <Svg w={7} h={12} className="-ml-[3px]">
    <path d="M0 .8h7M0 11.200h7" stroke="#bdbdbd" strokeWidth="1.500" />
    <path d="M3.500 1v10" stroke="#a0a0a0" strokeWidth="3" />
  </Svg>
);

// one bar per layer, one empty lane per open property
const Lane = ({ bar }) => (
  <div className={clsx('flex h-[17px] border-b border-[#1f1f1f]', bar ? 'bg-[#303030]' : 'bg-[#282828]')}>
    <span className="w-[7px] bg-[#303030]" />
    <div className={clsx('flex flex-1 items-center', bar ? 'bg-[#7b3a3a] border-b border-[#5c2a2a]' : 'bg-[#343434]')}>
      {!bar && <Keyframe />}
    </div>
    <span className="w-[8px]" />
  </div>
);

const Track = () => (
  <div className="relative flex min-w-0 flex-1 flex-col overflow-hidden pt-[5px]">
    <div className="flex h-[10px] border-y border-black bg-[#1c1c1c]">
      <span className="w-[8px] rounded-l-full bg-[#2d8ceb]" />
      <span className="flex-1 bg-[#6b6b6b]" />
      <span className="w-[7px] rounded-r-full bg-[#2d8ceb]" />
    </div>
    <div className="flex h-[19px] justify-between bg-[#262626] pr-[7px] pl-[7px] text-[10px] text-[#a0a0a0]">
      {times.map((t) => (
        <span key={t} className="flex w-0 flex-col items-center justify-between whitespace-nowrap">
          <span className="leading-[15px]">{t}</span>
          <span className="h-[4px] w-px bg-[#8a8a8a]" />
        </span>
      ))}
    </div>
    <div className="flex h-[17px] justify-between border-y border-black bg-[#262626] pl-px">
      <span className="w-[5px] rounded-l bg-[#2d8ceb]" />
      <span className="ml-px flex-1 bg-[#646464]" />
      <span className="mr-px w-[5px] rounded-r bg-[#2d8ceb]" />
    </div>
    <div className="h-[4px] border-b border-black pr-[8px] pl-[7px]">
      <div className="h-full bg-[#17c022]" />
    </div>
    {layers.map((l) => (
      <React.Fragment key={l.id}>
        <Lane bar />
        {l.effects && <Lane />}
        <Lane />
        <Lane />
      </React.Fragment>
    ))}
    <div className="flex-1 bg-[#282828] pr-[8px] pl-[7px]">
      <div className="h-full bg-[#343434]" />
    </div>
    {/* playhead */}
    <div className="absolute top-[20px] bottom-0 left-[1px] flex w-[13px] flex-col items-center">
      <Svg w={13} h={13}>
        <path d="M.5 0h12v6L6.500 12.500.5 6Z" fill="#2d8ceb" />
        <path d="M6.500 6v6" stroke="#333" />
      </Svg>
      <span className="w-px flex-1 bg-[#2d8ceb]" />
    </div>
  </div>
);

const Timeline = () => (
  <section className="mr-[3px] ml-[2px] flex h-[367px] shrink-0 flex-col bg-[#282828] text-[11px] text-[#a8a8a8]">
    <div className="flex h-[28px] items-center pl-[10px]">
      <CloseX />
      <span className="mr-[10px] ml-[10px] size-[11px] bg-[#a8946d]" />
      <button className="mr-2 text-[#cfcfcf]">Comp 1</button>
      <MenuLines />
    </div>
    <div className="flex min-h-0 flex-1">
      <div className="w-[813px] shrink-0 border-r border-black">
        <TimelineControls />
        <ColumnHeads />
        {layers.map((l) => (
          <React.Fragment key={l.id}>
            <LayerRow layer={l} />
            {l.effects && <PropRow label="Effects" />}
            <PropRow label="Transform" open value="Reset" />
            <PropRow label="Position" timed value={l.position} whip />
          </React.Fragment>
        ))}
      </div>
      <Track />
      <div className="flex w-[18px] flex-col items-center bg-[#262626] pt-[37px] text-[#b0b0b0]">
        <button aria-label="Marker bin">
          <Svg w={11} h={14}><path d="M0 0h11v9l-5.500 5L0 9Z" fill="currentColor" /></Svg>
        </button>
        <button aria-label="Comp button" className="mt-[6px]">
          <Svg w={14} h={12}>
            <path d="M7 2h7v7H9Z" fill="currentColor" />
            <path d="M8 .8.8 6.500H5M8 .8v3" stroke="currentColor" strokeWidth="1.200" />
            <circle cx="6.500" cy="8" r="3" stroke="currentColor" strokeWidth="1.200" fill="#262626" />
          </Svg>
        </button>
      </div>
    </div>
  </section>
);

const App = () => (
  <div className="flex h-screen flex-col overflow-hidden bg-[#151515] font-['Lato',sans-serif]">
    <MenuBar />
    <Toolbar />
    <main className="flex min-h-0 flex-1 pt-px pr-[3px] pb-[4px] pl-[2px]">
      <EffectControls />
      <Composition />
    </main>
    <Timeline />
  </div>
);

export default App;
